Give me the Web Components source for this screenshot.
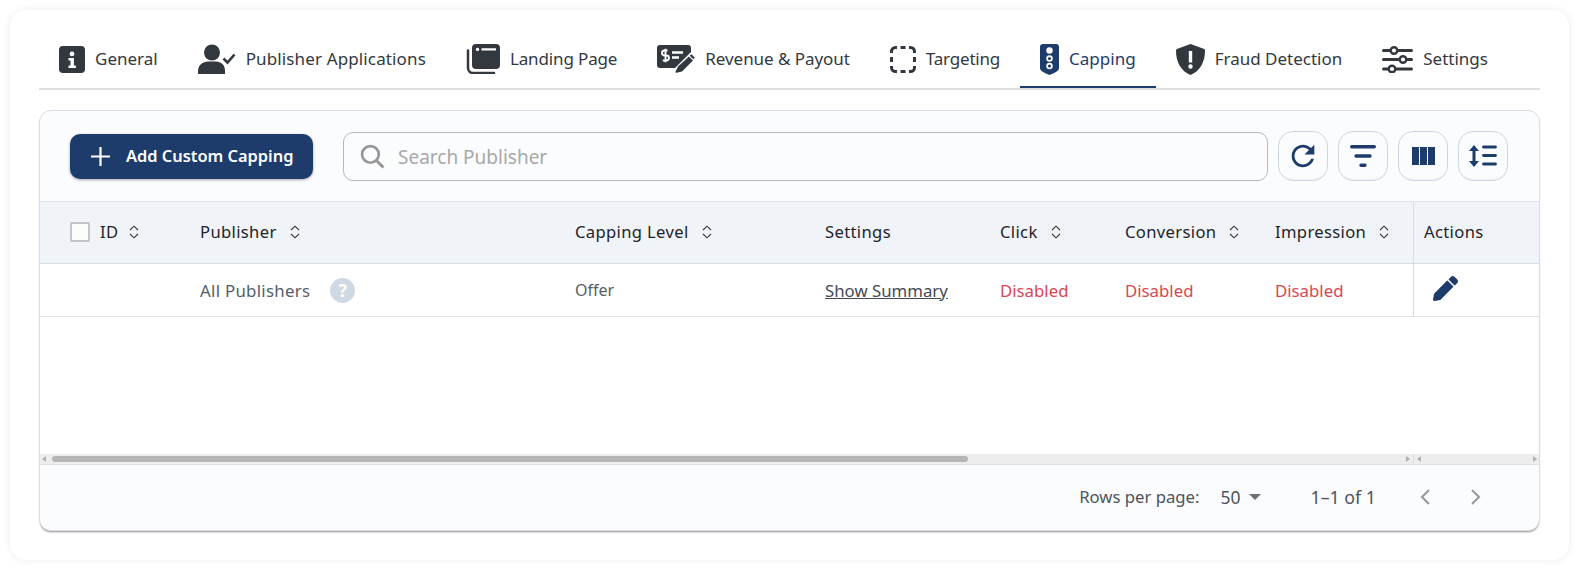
<!DOCTYPE html>
<html lang="en">
<head>
<meta charset="utf-8">
<title>Capping</title>
<style>
  html, body { margin: 0; background: #fff; }
  body { font-family: "Noto Sans", sans-serif; color: #32383e; }
</style>
</head>
<body>
<offer-card>
  <tab-bar>
    <tab-item icon="info" w="26">General</tab-item>
    <tab-item icon="user" w="38" ls=".13">Publisher Applications</tab-item>
    <tab-item icon="page" w="34" ls="-.14">Landing Page</tab-item>
    <tab-item icon="cheque" w="38" ls="-.05">Revenue &amp; Payout</tab-item>
    <tab-item icon="target" w="26" ls="-.2">Targeting</tab-item>
    <tab-item icon="light" w="19" active>Capping</tab-item>
    <tab-item icon="shield" w="29">Fraud Detection</tab-item>
    <tab-item icon="sliders" w="31">Settings</tab-item>
  </tab-bar>
  <capping-table></capping-table>
</offer-card>

<script>
// Iconos de las pestañas y de la barra de herramientas
const ICONS = {
  info: `<svg viewBox="0 0 26 27"><path fill="currentColor" fill-rule="evenodd" d="M4 0h18a4 4 0 0 1 4 4v19a4 4 0 0 1-4 4H4a4 4 0 0 1-4-4V4a4 4 0 0 1 4-4zM13 5.500a2.400 2.400 0 1 0 0 4.800a2.400 2.400 0 0 0 0-4.800zM9.500 12v2.600h2v4.800h-2V22h7.400v-2.600h-2V12z"/></svg>`,
  user: `<svg viewBox="0 0 38 30"><g fill="currentColor"><circle cx="14" cy="8.500" r="8"/><path d="M0 30v-3c0-6 5-9.500 10-9.500h8c5 0 9 3.500 9 9.500v3z"/></g><path d="M25.500 14.500l4 4l7-8" fill="none" stroke="currentColor" stroke-width="2.600"/></svg>`,
  page: `<svg viewBox="0 0 34 30"><path d="M2 6.500V24a5 5 0 0 0 5 5h21" fill="none" stroke="currentColor" stroke-width="2.500" stroke-linecap="round"/><path fill="currentColor" fill-rule="evenodd" d="M10 0h20a4 4 0 0 1 4 4v17a4 4 0 0 1-4 4H10a4 4 0 0 1-4-4V4a4 4 0 0 1 4-4zM11.500 3.700a1.700 1.700 0 1 0 0 3.400a1.700 1.700 0 0 0 0-3.400zM15.500 4.300v2.200h14.500V4.300z"/></svg>`,
  cheque: `<svg viewBox="0 0 38 28"><path fill="currentColor" d="M3 0h28a3 3 0 0 1 3 3v4L18 23H3a3 3 0 0 1-3-3V3a3 3 0 0 1 3-3z"/><path d="M10.500 5.500H7.500a2 2 0 0 0 0 5h2a2.200 2.200 0 0 1 0 5H5.800M8.500 3.800v13.500" fill="none" stroke="#fff" stroke-width="1.900"/><path d="M15 7.500h11M15 12.500h7" stroke="#fff" stroke-width="2.400"/><path fill="currentColor" d="M32 11.500l4 4L25 26.500l-5.500 1.300c-.7.100-1.100-.3-1-1l2.500-5.300z"/><path fill="currentColor" d="M34.500 9.300l3.200 3.200l-1.300 1.800l-3.600-3.600z"/></svg>`,
  target: `<svg viewBox="0 0 26 27"><path fill="none" stroke="currentColor" stroke-width="3" d="M1.500 7V5.500a4 4 0 0 1 4-4H7M19 1.500h1.500a4 4 0 0 1 4 4V7M24.500 20v1.500a4 4 0 0 1-4 4H19M7 25.500H5.500a4 4 0 0 1-4-4V20M10.500 1.500h5M10.500 25.500h5M1.500 11v5M24.500 11v5"/></svg>`,
  light: `<svg viewBox="0 0 19 31"><path fill="currentColor" d="M3 0h13a3 3 0 0 1 3 3v21c0 2.500-3 4.500-9.500 7C3 28.500 0 26.500 0 24V3a3 3 0 0 1 3-3z"/><circle cx="9.500" cy="6.500" r="3.200" fill="#fff"/><circle cx="9.500" cy="14.500" r="2.400" fill="none" stroke="#fff" stroke-width="1.700"/><circle cx="9.500" cy="22" r="2.400" fill="none" stroke="#fff" stroke-width="1.700"/></svg>`,
  shield: `<svg viewBox="0 0 29 31"><path fill="currentColor" fill-rule="evenodd" d="M14.500 0l13 4.700c1 .4 1.500 1 1.500 2C29 18 24 27 14.500 31C5 27 0 18 0 6.700c0-1 .5-1.600 1.500-2zM12.800 7v11.500h3.400V7zM14.500 20.300a2.200 2.200 0 1 0 0 4.400a2.200 2.200 0 0 0 0-4.400z"/></svg>`,
  sliders: `<svg viewBox="0 0 31 27"><g stroke="currentColor" stroke-width="3" stroke-linecap="round" fill="#fff"><path d="M1.500 4.500h28M1.500 13.500h28M1.500 23h28"/><circle cx="12" cy="4.500" r="3.300" stroke-width="2.400"/><circle cx="21" cy="13.500" r="3.300" stroke-width="2.400"/><circle cx="10" cy="23" r="3.300" stroke-width="2.400"/></g></svg>`,
  refresh: `<svg viewBox="0 0 24 24" width="34" height="34"><path fill="currentColor" d="M17.650 6.350C16.200 4.900 14.210 4 12 4c-4.420 0-7.990 3.580-7.990 8s3.570 8 7.990 8c3.730 0 6.840-2.550 7.730-6h-2.080c-.82 2.330-3.040 4-5.650 4-3.310 0-6-2.690-6-6s2.690-6 6-6c1.660 0 3.140.69 4.220 1.780L13 11h7V4l-2.350 2.350z"/></svg>`,
  filter: `<svg viewBox="0 0 26 22" width="26" height="22"><g stroke="currentColor" stroke-width="3.400" stroke-linecap="round"><path d="M1.700 1.800h22.600M6 11h14M11 20.200h4"/></g></svg>`,
  columns: `<svg viewBox="0 0 23 18" width="23" height="18"><g fill="currentColor"><rect width="7" height="18"/><rect x="8" width="7" height="18"/><rect x="16" width="7" height="18"/></g></svg>`,
  density: `<svg viewBox="0 0 28 22" width="28" height="22"><path fill="currentColor" d="M5 0l5 6H6.500v10H10l-5 6l-5-6h3.500V6H0z"/><g stroke="currentColor" stroke-width="2.800" stroke-linecap="round"><path d="M14.500 2h12M14.500 10.500h12M14.500 19h12"/></g></svg>`,
  pen: `<svg viewBox="0 0 512 512" width="25" height="25"><path fill="currentColor" d="M497.900 142.100l-46.100 46.100c-4.700 4.700-12.300 4.700-17 0l-111-111c-4.700-4.700-4.700-12.300 0-17l46.100-46.100c18.700-18.700 49.100-18.700 67.900 0l60.100 60.100c18.800 18.700 18.800 49.100 0 67.900zM284.200 99.800L21.600 362.400.4 483.900c-2.900 16.400 11.400 30.600 27.800 27.800l121.500-21.300 262.600-262.600c4.700-4.700 4.700-12.300 0-17l-111-111c-4.800-4.700-12.400-4.700-17.100 0z"/></svg>`,
  search: `<svg viewBox="0 0 24 24" width="25" height="25"><circle cx="10" cy="10" r="8" fill="none" stroke="currentColor" stroke-width="2.600"/><path d="M16 16l6.500 6.500" stroke="currentColor" stroke-width="2.800"/></svg>`,
  sort: `<svg viewBox="0 0 12 14" width="12" height="14"><path d="M2 5l4-3.800L10 5M2 9l4 3.800L10 9" fill="none" stroke="#33383e" stroke-width="1.100"/></svg>`
};

// Tarjeta exterior de la página
class OfferCard extends HTMLElement {
  constructor() {
    super();
    this.shadowDOM = this.attachShadow({ mode: 'open' });
    this.shadowDOM.innerHTML = `
      <style>
        :host {
          display: flex;
          flex-direction: column;
          box-sizing: border-box;
          margin: 10px;
          height: 550px;
          padding: 20px 29px 0;
          background: #fff;
          border-radius: 16px;
          box-shadow: 0 0 8px rgba(0, 0, 0, .08);
        }
      </style>
      <slot></slot>
    `;
  }
}
customElements.define('offer-card', OfferCard);

class TabBar extends HTMLElement {
  constructor() {
    super();
    this.shadowDOM = this.attachShadow({ mode: 'open' });
    this.shadowDOM.innerHTML = `
      <style>
        :host {
          display: flex;
          height: 58px;
          border-bottom: 2px solid #dfdfdf;
          margin-bottom: 20px;
        }
      </style>
      <slot></slot>
    `;
  }
}
customElements.define('tab-bar', TabBar);

class TabItem extends HTMLElement {
  constructor() {
    super();
    this.shadowDOM = this.attachShadow({ mode: 'open' });
  }

  connectedCallback() {
    const width = this.getAttribute('w');
    const spacing = this.getAttribute('ls') || '0';
    this.shadowDOM.innerHTML = `
      <style>
        :host {
          display: flex;
          align-items: center;
          gap: 10px;
          box-sizing: border-box;
          height: 58px;
          padding: 0 20px;
          font: 17px "Noto Sans", sans-serif;
          letter-spacing: ${spacing}px;
          color: #32383e;
          white-space: nowrap;
        }
        :host([active]) {
          color: #1e3c6b;
          box-shadow: inset 0 -2px 0 #1e3c6b;
        }
        .icon { display: flex; width: ${width}px; flex: none; }
        svg { width: 100%; display: block; }
        .label { padding-bottom: 2px; }
      </style>
      <span class="icon">${ICONS[this.getAttribute('icon')]}</span>
      <span class="label"><slot></slot></span>
    `;
  }
}
customElements.define('tab-item', TabItem);

class ToolButton extends HTMLElement {
  constructor() {
    super();
    this.shadowDOM = this.attachShadow({ mode: 'open' });
  }

  connectedCallback() {
    this.shadowDOM.innerHTML = `
      <style>
        :host {
          display: flex;
          align-items: center;
          justify-content: center;
          box-sizing: border-box;
          width: 50px;
          height: 50px;
          color: #1e3c6b;
          background: #fbfcfe;
          border: 1px solid #cdd7e1;
          border-radius: 15px;
          box-shadow: inset 0 -4px 3px -3px rgba(0, 0, 0, .06);
        }
      </style>
      ${ICONS[this.getAttribute('icon')]}
    `;
  }
}
customElements.define('tool-button', ToolButton);

class TableToolbar extends HTMLElement {
  constructor() {
    super();
    this.shadowDOM = this.attachShadow({ mode: 'open' });
    this.shadowDOM.innerHTML = `
      <style>
        :host {
          display: flex;
          align-items: center;
          box-sizing: border-box;
          height: 91px;
          padding: 0 30px;
          border-bottom: 1px solid #dde2e8;
          font-family: "Noto Sans", sans-serif;
        }
        .add {
          display: flex;
          align-items: center;
          gap: 16px;
          box-sizing: border-box;
          width: 243px;
          height: 45px;
          padding-left: 21px;
          color: #fff;
          background: #1e3c6b;
          border-radius: 10px;
          box-shadow: 0 1px 3px rgba(0, 0, 0, .35);
          font-size: 16.4px;
          font-weight: 600;
          white-space: nowrap;
        }
        .add span { padding-bottom: 2px; }
        .search {
          display: flex;
          align-items: center;
          gap: 13px;
          box-sizing: border-box;
          width: 925px;
          height: 49px;
          margin: 0 10px 0 30px;
          padding-left: 16px;
          border: 1px solid #b4b9bf;
          border-radius: 10px;
          color: #979797;
          font-size: 19px;
        }
        .search span { color: #a8a8a8; padding-top: 2px; }
        .tools { display: flex; gap: 10px; }
      </style>
      <div class="add">
        <svg viewBox="0 0 19 19" width="19" height="19"><path d="M9.500 0v19M0 9.500h19" stroke="#fff" stroke-width="2.200"/></svg>
        <span>Add Custom Capping</span>
      </div>
      <div class="search">${ICONS.search}<span>Search Publisher</span></div>
      <div class="tools">
        <tool-button icon="refresh"></tool-button>
        <tool-button icon="filter"></tool-button>
        <tool-button icon="columns"></tool-button>
        <tool-button icon="density"></tool-button>
      </div>
    `;
  }
}
customElements.define('table-toolbar', TableToolbar);

class TablePager extends HTMLElement {
  constructor() {
    super();
    this.shadowDOM = this.attachShadow({ mode: 'open' });
    this.shadowDOM.innerHTML = `
      <style>
        :host {
          display: flex;
          align-items: center;
          justify-content: flex-end;
          flex: 1;
          padding: 0 58px 2px 0;
          font: 16.7px "Noto Sans", sans-serif;
          color: #4d545b;
          white-space: nowrap;
        }
        .size { margin-left: 21px; font-size: 17.5px; }
        .count { font-size: 17.8px; }
        .caret { width: 0; height: 0; margin: 0 49px 0 9px; border: 6px solid transparent; border-top: 6px solid #707070; border-bottom: 0; }
        svg { display: block; }
        .prev { margin-left: 44px; }
        .next { margin-left: 41px; }
      </style>
      <span>Rows per page:</span>
      <span class="size">50</span>
      <span class="caret"></span>
      <span class="count">1–1 of 1</span>
      <svg class="prev" viewBox="0 0 10 16" width="10" height="16"><path d="M9 1L2 8l7 7" fill="none" stroke="#979797" stroke-width="2"/></svg>
      <svg class="next" viewBox="0 0 10 16" width="10" height="16"><path d="M1 1l7 7-7 7" fill="none" stroke="#979797" stroke-width="2"/></svg>
    `;
  }
}
customElements.define('table-pager', TablePager);

// Tabla principal con la fila de publishers
class CappingTable extends HTMLElement {
  constructor() {
    super();
    this.shadowDOM = this.attachShadow({ mode: 'open' });
    this.shadowDOM.innerHTML = `
      <style>
        :host {
          display: flex;
          flex-direction: column;
          box-sizing: border-box;
          height: 421px;
          background: #fbfcfe;
          border: 1px solid #d8dde3;
          border-radius: 12px;
          box-shadow: 0 2px 2px -1px rgba(0, 0, 0, .45);
          overflow: hidden;
          font-family: "Noto Sans", sans-serif;
        }
        .row {
          display: grid;
          grid-template-columns: 150px 375px 250px 175px 125px 150px 148px 1fr;
          align-items: center;
        }
        .head {
          height: 61px;
          background: #f0f3f8;
          border-bottom: 1px solid #d8dde3;
          color: #1f2328;
          font-size: 16.6px;
          letter-spacing: .35px;
        }
        .head .cell { padding-bottom: 2px; }
        .head .last { padding-bottom: 2px; }
        .body {
          height: 52px;
          background: #fff;
          border-bottom: 1px solid #dde2e8;
          color: #555e68;
          font-size: 16.8px;
        }
        .cell { display: flex; align-items: center; gap: 12px; padding-left: 10px; height: 100%; white-space: nowrap; box-sizing: border-box; }
        .cell.first { padding-left: 30px; gap: 10px; }
        .cell.last { border-left: 1px solid #d8dde3; }
        .check { width: 16px; height: 16px; border: 2px solid #c4c4c4; border-radius: 2px; background: #fbfcfe; }
        .help {
          display: flex;
          align-items: center;
          justify-content: center;
          width: 25px;
          height: 25px;
          margin-left: 8px;
          border-radius: 50%;
          background: #cfd9e4;
          color: #fff;
          font-size: 17px;
          font-weight: 700;
          letter-spacing: 0;
        }
        .wide { letter-spacing: .3px; }
        .tight { font-size: 16px; }
        .link { color: #444b52; text-decoration: underline; }
        .off { color: #d9474f; }
        .pen { color: #1e3c6b; padding: 0 0 4px 19px; }
        .pen svg { display: block; }
        .space { height: 137px; background: #fff; }
        .scroll {
          display: flex;
          height: 11px;
          background: #ededed;
          border-bottom: 1px solid #e0e0e0;
          box-sizing: border-box;
        }
        .track { position: relative; width: 1373px; }
        .rest { position: relative; flex: 1; border-left: 1px solid #dcdcdc; }
        .thumb { position: absolute; left: 12px; top: 2px; width: 916px; height: 6px; background: #b5b5b5; border-radius: 3px; }
        .arrow { position: absolute; top: 2px; width: 0; height: 0; border: 3px solid transparent; }
        .arrow.l { border-right: 4px solid #b0b0b0; border-left: 0; }
        .arrow.r { border-left: 4px solid #b0b0b0; border-right: 0; }
      </style>
      <table-toolbar></table-toolbar>
      <div class="row head">
        <div class="cell first"><span class="check"></span>ID ${ICONS.sort}</div>
        <div class="cell">Publisher ${ICONS.sort}</div>
        <div class="cell">Capping Level ${ICONS.sort}</div>
        <div class="cell">Settings</div>
        <div class="cell">Click ${ICONS.sort}</div>
        <div class="cell">Conversion ${ICONS.sort}</div>
        <div class="cell">Impression ${ICONS.sort}</div>
        <div class="cell last">Actions</div>
      </div>
      <div class="row body">
        <div class="cell first"></div>
        <div class="cell wide">All Publishers <span class="help">?</span></div>
        <div class="cell tight">Offer</div>
        <div class="cell"><span class="link">Show Summary</span></div>
        <div class="cell off">Disabled</div>
        <div class="cell off">Disabled</div>
        <div class="cell off">Disabled</div>
        <div class="cell last pen">${ICONS.pen}</div>
      </div>
      <div class="space"></div>
      <div class="scroll">
        <div class="track">
          <span class="arrow l" style="left:2px"></span>
          <span class="thumb"></span>
          <span class="arrow r" style="right:3px"></span>
        </div>
        <div class="rest">
          <span class="arrow l" style="left:3px"></span>
          <span class="arrow r" style="right:2px"></span>
        </div>
      </div>
      <table-pager></table-pager>
    `;
  }
}
customElements.define('capping-table', CappingTable);
</script>
</body>
</html>
